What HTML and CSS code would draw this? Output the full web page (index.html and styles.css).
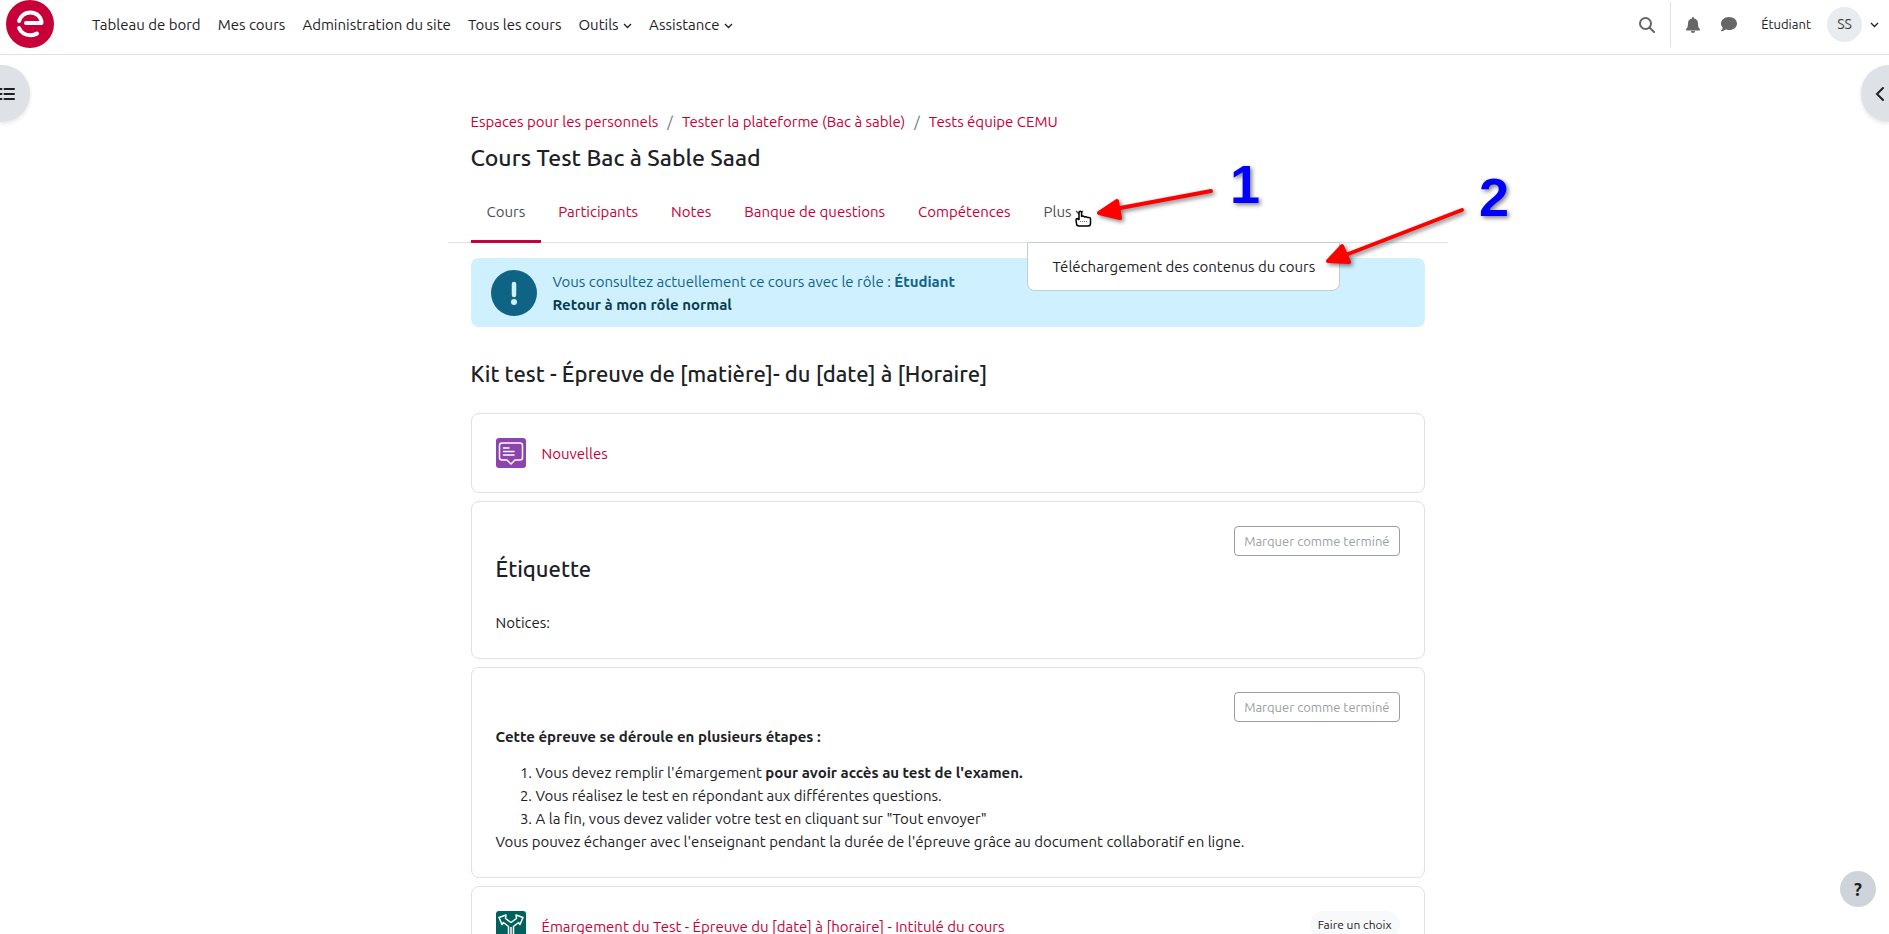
FILE: index.html
```
<!DOCTYPE html>
<html lang="fr">
<head>
  <meta charset="UTF-8">
  <title>Cours Test Bac à Sable Saad</title>
  <link rel="stylesheet" href="styles.css">
</head>
<body>

  <header class="navbar">
    <a class="logo" href="#" aria-label="Accueil">
      <svg width="48" height="48" viewBox="0 0 48 48">
        <circle cx="24" cy="24" r="24" fill="#c70039"/>
        <path d="M13 21C15 15.500 19 12.500 24.500 12.500C31 12.500 35.500 17.500 35.500 23H20M13 28C15 32.500 19.500 35.200 24.500 35.200C27.500 35.200 29.500 34.500 31 33.500" fill="none" stroke="#fff" stroke-width="4" stroke-linejoin="round" stroke-linecap="round"/>
      </svg>
    </a>
    <nav class="main-nav">
      <a href="#">Tableau de bord</a>
      <a href="#">Mes cours</a>
      <a href="#">Administration du site</a>
      <a href="#">Tous les cours</a>
      <a href="#">Outils <svg class="chevron" viewBox="0 0 9 6"><path d="M1 1l3.500 3.500L8 1"/></svg></a>
      <a href="#">Assistance <svg class="chevron" viewBox="0 0 9 6"><path d="M1 1l3.500 3.500L8 1"/></svg></a>
    </nav>
    <div class="user-nav">
      <button class="icon-btn search" aria-label="Recherche">
        <svg width="16" height="16" viewBox="0 0 16 16"><circle cx="6.500" cy="6.500" r="5.500" fill="none" stroke="#666" stroke-width="2"/><path d="M10.500 10.500L15 15" stroke="#666" stroke-width="2" stroke-linecap="round"/></svg>
      </button>
      <button class="icon-btn" aria-label="Notifications">
        <svg width="14" height="16" viewBox="0 0 14 16"><path d="M7 0a1 1 0 0 0-1 1v.6A5 5 0 0 0 2 6.500c0 3-.6 4.200-1.800 5.500-.5.600-.1 1.500.7 1.500h12.200c.8 0 1.200-.9.700-1.500C12.600 10.700 12 9.500 12 6.500a5 5 0 0 0-4-4.900V1a1 1 0 0 0-1-1zM5 14a2 2 0 0 0 4 0z" fill="#666"/></svg>
      </button>
      <button class="icon-btn" aria-label="Messages">
        <svg width="16" height="15" viewBox="0 0 16 15"><path d="M8 0C3.600 0 0 2.900 0 6.500c0 1.500.6 2.900 1.700 4C1.500 12 .7 13 .1 13.600c-.2.200-.1.600.3.600 1.900 0 3.400-.8 4.300-1.600 1 .3 2.100.5 3.300.5 4.400 0 8-2.900 8-6.600S12.400 0 8 0z" fill="#666"/></svg>
      </button>
      <span class="role">Étudiant</span>
      <button class="user-menu" aria-label="Menu utilisateur">
        <span class="avatar">SS</span>
        <svg class="chevron" viewBox="0 0 9 6"><path d="M1 1l3.500 3.500L8 1"/></svg>
      </button>
    </div>
  </header>

  <button class="drawer drawer-left" aria-label="Ouvrir l'index du cours">
    <svg width="16" height="14" viewBox="0 0 16 14"><path d="M5.500 2H15M5.500 7H15M5.500 12H15M1 2h1.500M1 7h1.500M1 12h1.500" stroke="#1d2125" stroke-width="2" stroke-linecap="round"/></svg>
  </button>
  <button class="drawer drawer-right" aria-label="Ouvrir le tiroir des blocs">
    <svg width="10" height="16" viewBox="0 0 10 16"><path d="M8 2L2 8l6 6" fill="none" stroke="#1d2125" stroke-width="2" stroke-linecap="round"/></svg>
  </button>

  <main class="page">
    <ol class="breadcrumb">
      <li><a href="#">Espaces pour les personnels</a></li>
      <li><a href="#">Tester la plateforme (Bac à sable)</a></li>
      <li><a href="#">Tests équipe CEMU</a></li>
    </ol>
    <h1>Cours Test Bac à Sable Saad</h1>

    <nav class="tabs">
      <a class="active" href="#">Cours</a>
      <a href="#">Participants</a>
      <a href="#">Notes</a>
      <a href="#">Banque de questions</a>
      <a href="#">Compétences</a>
      <div class="more">
        <a class="more-link" href="#">Plus <svg class="chevron" viewBox="0 0 9 6"><path d="M1 1l3.500 3.500L8 1"/></svg></a>
        <div class="menu"><a href="#">Téléchargement des contenus du cours</a></div>
        <svg class="pointer" width="17" height="17" viewBox="0 0 17 17"><path d="M4 10V2.500a1.300 1.300 0 0 1 2.600 0V6.500q1.500-1 3 .5 1.500-.8 3 .5 2.900-.5 2.900 1.500v4.500q0 2.500-2.500 2.500H4q-2.500 0-2.500-2.500L1 10q0-1.500 1.500-1.500L4 10" fill="#fff" stroke="#000" stroke-width="1.500" stroke-linejoin="round"/><path d="M5 11.500h8" stroke="#777" stroke-dasharray="1 1"/></svg>
        <!-- étapes 1 et 2 -->
        <svg class="steps" width="430" height="130" viewBox="0 0 430 130">
          <g class="arrow">
            <path d="M126 34L30 52"/>
            <path class="head" d="M14 56L32 44L35 61Z"/>
            <path d="M377 53L258 99"/>
            <path class="head" d="M243 104L257 89L264 105Z"/>
          </g>
          <text x="145" y="46">1</text>
          <text x="394" y="59">2</text>
        </svg>
      </div>
    </nav>

    <div class="alert">
      <svg width="46" height="46" viewBox="0 0 46 46"><circle cx="23" cy="23" r="23" fill="#0f6486"/><path d="M23 14v11" stroke="#d1f0fd" stroke-width="4.500" stroke-linecap="round"/><circle cx="23" cy="32" r="3" fill="#d1f0fd"/></svg>
      <p>Vous consultez actuellement ce cours avec le rôle : <strong>Étudiant</strong><br>
      <a href="#">Retour à mon rôle normal</a></p>
    </div>

    <h2>Kit test - Épreuve de [matière]- du [date] à [Horaire]</h2>

    <section class="card activity">
      <svg class="activity-icon" viewBox="0 0 30 30"><rect width="30" height="30" rx="3" fill="#8e44ad"/><path d="M6 5h18q2.500 0 2.500 2.500v12q0 2.500-2.500 2.500h-5l-4 4-4-4H6q-2.500 0-2.500-2.500v-12Q3.500 5 6 5z" fill="none" stroke="#fff" stroke-width="1.500" stroke-linejoin="round"/><path d="M7.500 10H13M7.500 13.500H18M7.500 17H18" stroke="#fff" stroke-width="1.500" stroke-linecap="round"/></svg>
      <a href="#">Nouvelles</a>
    </section>

    <section class="card">
      <div class="completion"><button class="done-btn">Marquer comme terminé</button></div>
      <h3>Étiquette</h3>
      <p>Notices:</p>
    </section>

    <section class="card">
      <div class="completion"><button class="done-btn">Marquer comme terminé</button></div>
      <p class="intro"><strong>Cette épreuve se déroule en plusieurs étapes :</strong></p>
      <ol class="stages">
        <li>Vous devez remplir l'émargement <strong>pour avoir accès au test de l'examen.</strong></li>
        <li>Vous réalisez le test en répondant aux différentes questions.</li>
        <li>A la fin, vous devez valider votre test en cliquant sur "Tout envoyer"</li>
      </ol>
      <p>Vous pouvez échanger avec l'enseignant pendant la durée de l'épreuve grâce au document collaboratif en ligne.</p>
    </section>

    <section class="card activity">
      <svg class="activity-icon" viewBox="0 0 30 30"><rect width="30" height="30" rx="3" fill="#00615c"/><path d="M12.500 30V15.500L7.500 11.500 6 13.500 3 6.500l7-2.500-.5 3.500L15 11.500l5.500-4L20 4l7 2.500-3 7-1.500-2-5 4V30M15 16v14" fill="none" stroke="#fff" stroke-width="1.500" stroke-linejoin="round"/></svg>
      <a href="#">Émargement du Test - Épreuve du [date] à [horaire] - Intitulé du cours</a>
      <span class="badge">Faire un choix</span>
    </section>
  </main>

  <button class="help" aria-label="Aide">?</button>

</body>
</html>
```
FILE: styles.css
```
* {
  box-sizing: border-box;
}
html {
  height: 100%;
  overflow: hidden;
}
body {
  margin: 0;
  height: 100%;
  overflow: hidden;
  background-color: #fff;
  color: #1d2125;
  font-family: Ubuntu, "Noto Sans", sans-serif;
  font-size: 15px;
  line-height: 23px;
}
a {
  color: #c70039;
  text-decoration: none;
}
button {
  font-family: inherit;
  color: inherit;
  border: 0;
  padding: 0;
  background: none;
  cursor: pointer;
}
p {
  margin: 0;
}
strong {
  font-weight: 600;
}
.chevron {
  width: 9px;
  height: 6px;
  vertical-align: middle;
  fill: none;
  stroke: currentColor;
  stroke-width: 1.3;
}

/* barre du haut */
.navbar {
  display: flex;
  justify-content: space-between;
  height: 55px;
  padding: 0 10px 0 6px;
  border-bottom: 1px solid #dee2e6;
}
.logo {
  width: 48px;
  height: 48px;
}
.main-nav {
  display: flex;
  flex: 1;
  gap: 17px;
  height: 49px;
  align-items: center;
  padding-left: 38px;
}
.main-nav a {
  color: #1d2125;
}
.main-nav .chevron {
  margin-left: 1px;
}
.user-nav {
  display: flex;
  align-items: center;
  height: 49px;
}
.icon-btn {
  display: flex;
  justify-content: center;
  width: 36px;
}
.icon-btn.search {
  align-items: center;
  width: 40px;
  height: 45px;
  padding-right: 8px;
  margin-right: 4px;
  border-right: 1px solid #dee2e6;
}
.role {
  margin: 0 16px 0 14px;
  font-size: 13px;
}
.user-menu {
  display: flex;
  align-items: center;
  gap: 8px;
}
.avatar {
  width: 35px;
  height: 35px;
  border-radius: 50%;
  background-color: #e9ecef;
  color: #343a40;
  font-size: 14px;
  line-height: 35px;
}

.drawer {
  position: fixed;
  top: 65px;
  display: flex;
  align-items: center;
  height: 57px;
  background-color: #dee2e6;
  box-shadow: 0 2px 4px rgba(0, 0, 0, 0.1);
}
.drawer-left {
  left: 0;
  width: 30px;
  border-radius: 0 28px 28px 0;
}
.drawer-left svg {
  margin-left: -1px;
}
.drawer-right {
  right: 0;
  width: 28px;
  padding-left: 14px;
  border-radius: 28px 0 0 28px;
}

/* contenu du cours */
.page {
  width: 100%;
  max-width: 960px;
  margin: 0 auto;
  padding: 55px 0 0 6px;
}
.breadcrumb {
  display: flex;
  margin: 0;
  padding: 0;
  list-style: none;
}
.breadcrumb li + li::before {
  content: "/";
  padding: 0 9px;
  color: #6a737b;
}
h1, h2, h3 {
  margin: 0;
  font-weight: 500;
}
h1 {
  margin-top: 11px;
  font-size: 23px;
  line-height: 28px;
}
.tabs {
  display: flex;
  gap: 1px;
  height: 61px;
  margin: 10px -23px 15px;
  padding: 0 23px;
  border-bottom: 1px solid #dee2e6;
}
.tabs > a, .more-link {
  display: block;
  height: 61px;
  padding: 0 16px;
  line-height: 60px;
}
.tabs > .active {
  border-bottom: 3px solid #c70039;
  color: #495057;
}
.more {
  position: relative;
}
.more-link {
  color: #495057;
}
.menu {
  position: absolute;
  top: 60px;
  left: 0;
  padding: 12px 24px;
  border: 1px solid #c5ccd2;
  border-radius: 0 0 8px 8px;
  background-color: #fff;
  white-space: nowrap;
}
.menu a {
  color: #1d2125;
}
.pointer {
  position: absolute;
  top: 28px;
  left: 48px;
}
.steps {
  position: absolute;
  top: -25px;
  left: 58px;
  overflow: visible;
  pointer-events: none;
  filter: drop-shadow(2px 2px 2px rgba(0, 0, 0, 0.5));
}
.steps text {
  fill: #00f;
  font: bold 54px "Liberation Sans", sans-serif;
}
.arrow {
  fill: none;
  stroke: #f00;
  stroke-width: 4;
  stroke-linecap: round;
  stroke-linejoin: round;
}
.arrow .head {
  fill: #f00;
}

.alert {
  display: flex;
  align-items: center;
  gap: 16px;
  padding: 12px 20px 11px;
  border-radius: 8px;
  background-color: #cff0fe;
  color: #0f6486;
}
.alert a {
  color: #083d52;
  font-weight: 600;
}
h2 {
  margin: 33px 0 25px;
  font-size: 22px;
  line-height: 28px;
}
.card {
  margin-bottom: 8px;
  padding: 24px;
  border: 1px solid #dee2e6;
  border-radius: 8px;
}
.activity {
  display: flex;
  align-items: center;
  gap: 16px;
}
.activity-icon {
  width: 30px;
  height: 30px;
}
.completion {
  display: flex;
  justify-content: flex-end;
}
.done-btn {
  height: 30px;
  padding: 0 9px;
  border: 1px solid #9a9fa6;
  border-radius: 4px;
  color: #9a9fa6;
  font-size: 13px;
}
h3 {
  margin-bottom: 29px;
  font-size: 22px;
  line-height: 26px;
}
.intro {
  margin: 3px 0 13px;
}
.stages {
  margin: 0;
  padding-left: 40px;
}
.badge {
  align-self: flex-start;
  margin-left: auto;
  padding: 0 8px;
  border-radius: 14px;
  background-color: #f8f9fa;
  font-size: 12px;
  line-height: 27px;
}
.help {
  position: fixed;
  right: 13px;
  bottom: 27px;
  width: 36px;
  height: 36px;
  border-radius: 50%;
  background-color: #ced4da;
  font-size: 18px;
  font-weight: 600;
}
```
